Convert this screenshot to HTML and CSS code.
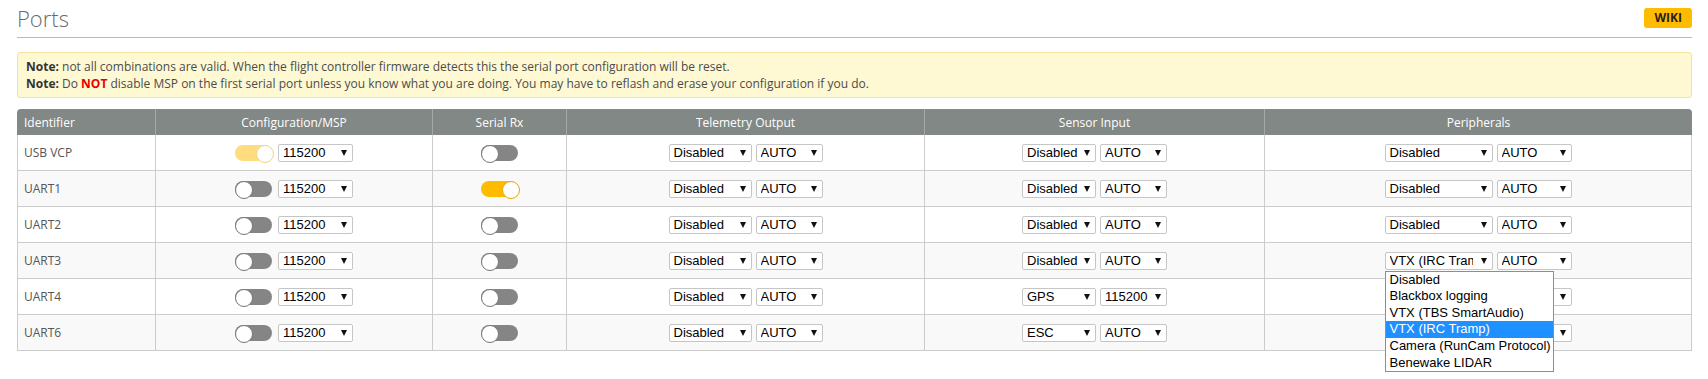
FILE: index.html
```html
<!DOCTYPE html>
<html lang="en">
<head>
  <meta charset="UTF-8" />
  <meta name="viewport" content="width=device-width, initial-scale=1.0"/>
  <title>Ports</title>
  <link rel="stylesheet" href="styles.css">
</head>
<body>

<div class="tab-ports">
  <div class="title-bar">
    <h1 class="tab-title">Ports</h1>
    <a class="wiki-btn" href="#">WIKI</a>
  </div>

  <div class="note">
    <p><strong>Note:</strong> not all combinations are valid. When the flight controller firmware detects this the serial port configuration will be reset.</p>
    <p><strong>Note:</strong> Do <span class="warn">NOT</span> disable MSP on the first serial port unless you know what you are doing. You may have to reflash and erase your configuration if you do.</p>
  </div>

  <table class="ports">
    <colgroup>
      <col style="width: 138px">
      <col style="width: 277px">
      <col style="width: 134px">
      <col style="width: 358px">
      <col style="width: 340px">
      <col style="width: 428px">
    </colgroup>
    <thead>
      <tr>
        <th>Identifier</th>
        <th>Configuration/MSP</th>
        <th>Serial Rx</th>
        <th>Telemetry Output</th>
        <th>Sensor Input</th>
        <th>Peripherals</th>
      </tr>
    </thead>
    <tbody>
      <!-- USB VCP -->
      <tr>
        <td class="ident">USB VCP</td>
        <td><div class="cell msp"><span class="switch on dim"></span><span class="select"><select class="w-baud"><option>115200</option></select></span></div></td>
        <td><div class="cell"><span class="switch"></span></div></td>
        <td><div class="cell"><span class="select"><select class="w-tele"><option>Disabled</option></select></span><span class="select"><select class="w-auto"><option>AUTO</option></select></span></div></td>
        <td><div class="cell"><span class="select"><select class="w-sensor"><option>Disabled</option></select></span><span class="select"><select class="w-auto"><option>AUTO</option></select></span></div></td>
        <td><div class="cell"><span class="select"><select class="w-periph"><option>Disabled</option></select></span><span class="select"><select class="w-auto-wide"><option>AUTO</option></select></span></div></td>
      </tr>
      <!-- UART1 -->
      <tr>
        <td class="ident">UART1</td>
        <td><div class="cell msp"><span class="switch"></span><span class="select"><select class="w-baud"><option>115200</option></select></span></div></td>
        <td><div class="cell"><span class="switch on"></span></div></td>
        <td><div class="cell"><span class="select"><select class="w-tele"><option>Disabled</option></select></span><span class="select"><select class="w-auto"><option>AUTO</option></select></span></div></td>
        <td><div class="cell"><span class="select"><select class="w-sensor"><option>Disabled</option></select></span><span class="select"><select class="w-auto"><option>AUTO</option></select></span></div></td>
        <td><div class="cell"><span class="select"><select class="w-periph"><option>Disabled</option></select></span><span class="select"><select class="w-auto-wide"><option>AUTO</option></select></span></div></td>
      </tr>
      <!-- UART2 -->
      <tr>
        <td class="ident">UART2</td>
        <td><div class="cell msp"><span class="switch"></span><span class="select"><select class="w-baud"><option>115200</option></select></span></div></td>
        <td><div class="cell"><span class="switch"></span></div></td>
        <td><div class="cell"><span class="select"><select class="w-tele"><option>Disabled</option></select></span><span class="select"><select class="w-auto"><option>AUTO</option></select></span></div></td>
        <td><div class="cell"><span class="select"><select class="w-sensor"><option>Disabled</option></select></span><span class="select"><select class="w-auto"><option>AUTO</option></select></span></div></td>
        <td><div class="cell"><span class="select"><select class="w-periph"><option>Disabled</option></select></span><span class="select"><select class="w-auto-wide"><option>AUTO</option></select></span></div></td>
      </tr>
      <!-- UART3, peripherals list open -->
      <tr>
        <td class="ident">UART3</td>
        <td><div class="cell msp"><span class="switch"></span><span class="select"><select class="w-baud"><option>115200</option></select></span></div></td>
        <td><div class="cell"><span class="switch"></span></div></td>
        <td><div class="cell"><span class="select"><select class="w-tele"><option>Disabled</option></select></span><span class="select"><select class="w-auto"><option>AUTO</option></select></span></div></td>
        <td><div class="cell"><span class="select"><select class="w-sensor"><option>Disabled</option></select></span><span class="select"><select class="w-auto"><option>AUTO</option></select></span></div></td>
        <td>
          <div class="cell">
            <span class="select">
              <select class="w-periph clip">
                <option>Disabled</option>
                <option>Blackbox logging</option>
                <option>VTX (TBS SmartAudio)</option>
                <option selected>VTX (IRC Tramp)</option>
                <option>Camera (RunCam Protocol)</option>
                <option>Benewake LIDAR</option>
              </select>
              <ul class="select-list">
                <li>Disabled</li>
                <li>Blackbox logging</li>
                <li>VTX (TBS SmartAudio)</li>
                <li class="active">VTX (IRC Tramp)</li>
                <li>Camera (RunCam Protocol)</li>
                <li>Benewake LIDAR</li>
              </ul>
            </span>
            <span class="select"><select class="w-auto-wide"><option>AUTO</option></select></span>
          </div>
        </td>
      </tr>
      <!-- UART4 -->
      <tr>
        <td class="ident">UART4</td>
        <td><div class="cell msp"><span class="switch"></span><span class="select"><select class="w-baud"><option>115200</option></select></span></div></td>
        <td><div class="cell"><span class="switch"></span></div></td>
        <td><div class="cell"><span class="select"><select class="w-tele"><option>Disabled</option></select></span><span class="select"><select class="w-auto"><option>AUTO</option></select></span></div></td>
        <td><div class="cell"><span class="select"><select class="w-sensor"><option>GPS</option></select></span><span class="select"><select class="w-auto"><option>115200</option></select></span></div></td>
        <td><div class="cell"><span class="select"><select class="w-periph"><option>Disabled</option></select></span><span class="select"><select class="w-auto-wide"><option>AUTO</option></select></span></div></td>
      </tr>
      <!-- UART6 -->
      <tr>
        <td class="ident">UART6</td>
        <td><div class="cell msp"><span class="switch"></span><span class="select"><select class="w-baud"><option>115200</option></select></span></div></td>
        <td><div class="cell"><span class="switch"></span></div></td>
        <td><div class="cell"><span class="select"><select class="w-tele"><option>Disabled</option></select></span><span class="select"><select class="w-auto"><option>AUTO</option></select></span></div></td>
        <td><div class="cell"><span class="select"><select class="w-sensor"><option>ESC</option></select></span><span class="select"><select class="w-auto"><option>AUTO</option></select></span></div></td>
        <td><div class="cell"><span class="select"><select class="w-periph"><option>Disabled</option></select></span><span class="select"><select class="w-auto-wide"><option>AUTO</option></select></span></div></td>
      </tr>
    </tbody>
  </table>
</div>

</body>
</html>
```

FILE: styles.css
```css
* {
  box-sizing: border-box;
  margin: 0;
  padding: 0;
}

html,
body {
  min-height: 100%;
}

body {
  font-family: "Open Sans", sans-serif;
  font-size: 12px;
  color: #4b4b4b;
  background-color: #fff;
}

.tab-ports {
  min-height: 379px;
  padding: 0 16px 0 17px;
}

/* title */
.title-bar {
  display: flex;
  justify-content: space-between;
  align-items: flex-start;
  height: 38px;
  border-bottom: 1px solid #ffbb00;
}

.tab-title {
  font-size: 22px;
  font-weight: 300;
  line-height: 30px;
  padding-top: 3px;
  color: #6a6a6a;
}

.wiki-btn {
  margin-top: 8px;
  height: 20px;
  line-height: 20px;
  padding: 0 10px;
  background-color: #ffbb00;
  border-radius: 3px;
  color: #222;
  font-size: 12px;
  font-weight: bold;
  text-decoration: none;
}

/* notes */
.note {
  margin-top: 14px;
  padding: 5px 8px;
  background-color: #fff9d3;
  border: 1px solid #f4e39c;
  border-radius: 3px;
  line-height: 17px;
}

.note strong {
  color: #333;
}

.note .warn {
  color: #e60000;
  font-weight: bold;
}

/* ports table */
.ports {
  width: 100%;
  margin-top: 11px;
  border-collapse: separate;
  border-spacing: 0;
  table-layout: fixed;
}

.ports th {
  height: 26px;
  background-color: #828885;
  color: #fff;
  font-weight: normal;
  text-align: center;
  border-left: 1px solid #a4a8a6;
}

.ports th:first-child {
  border-left: none;
  border-top-left-radius: 4px;
  text-align: left;
  padding-left: 7px;
}

.ports th:last-child {
  border-top-right-radius: 4px;
}

.ports td {
  height: 36px;
  border-left: 1px solid #ccc;
  border-bottom: 1px solid #ccc;
  text-align: center;
}

.ports td:last-child {
  border-right: 1px solid #ccc;
}

.ports tbody tr:nth-child(even) td {
  background-color: #f9f9f9;
}

.ports td.ident {
  text-align: left;
  padding-left: 6px;
  color: #555;
}

.cell {
  display: flex;
  justify-content: center;
  align-items: center;
  gap: 4px;
}

.cell.msp {
  gap: 6px;
}

/* toggle switch */
.switch {
  position: relative;
  display: inline-block;
  width: 37px;
  height: 16px;
  border-radius: 8px;
  background-color: #858585;
}

.switch::before {
  content: "";
  position: absolute;
  left: 0;
  top: 0;
  width: 16px;
  height: 16px;
  border-radius: 50%;
  background-color: #fff;
  border: 1px solid #777;
}

.switch.on {
  background-color: #ffbb00;
}

.switch.on::before {
  left: 21px;
  border-color: #e6a800;
}

.switch.dim {
  opacity: 0.5;
}

/* selects */
.select {
  position: relative;
  display: inline-block;
  height: 18px;
}

.select::after {
  content: "";
  position: absolute;
  right: 6px;
  top: 6px;
  border-left: 3px solid transparent;
  border-right: 3px solid transparent;
  border-top: 6px solid #111;
  pointer-events: none;
}

.select select {
  appearance: none;
  -webkit-appearance: none;
  display: block;
  height: 18px;
  padding: 0 16px 0 4px;
  border: 1px solid #c6c6c6;
  border-radius: 2px;
  background-color: #fff;
  color: #000;
  font-family: "Liberation Sans", Arial, sans-serif;
  font-size: 13px;
  line-height: 16px;
}

.select select.clip {
  padding-right: 19px;
}

.w-baud { width: 75px; }
.w-tele { width: 83px; }
.w-sensor { width: 74px; }
.w-auto { width: 67px; }
.w-periph { width: 108px; }
.w-auto-wide { width: 75px; }

/* open option list */
.select-list {
  position: absolute;
  left: 0;
  top: 19px;
  z-index: 10;
  width: 169px;
  list-style: none;
  background-color: #fff;
  border: 1px solid #8a8f96;
  text-align: left;
  font-family: "Liberation Sans", Arial, sans-serif;
  font-size: 13px;
  color: #000;
}

.select-list li {
  height: 16.67px;
  line-height: 16.67px;
  padding-left: 4px;
  white-space: nowrap;
}

.select-list li.active {
  background-color: #1e90ff;
  color: #fff;
}
```
